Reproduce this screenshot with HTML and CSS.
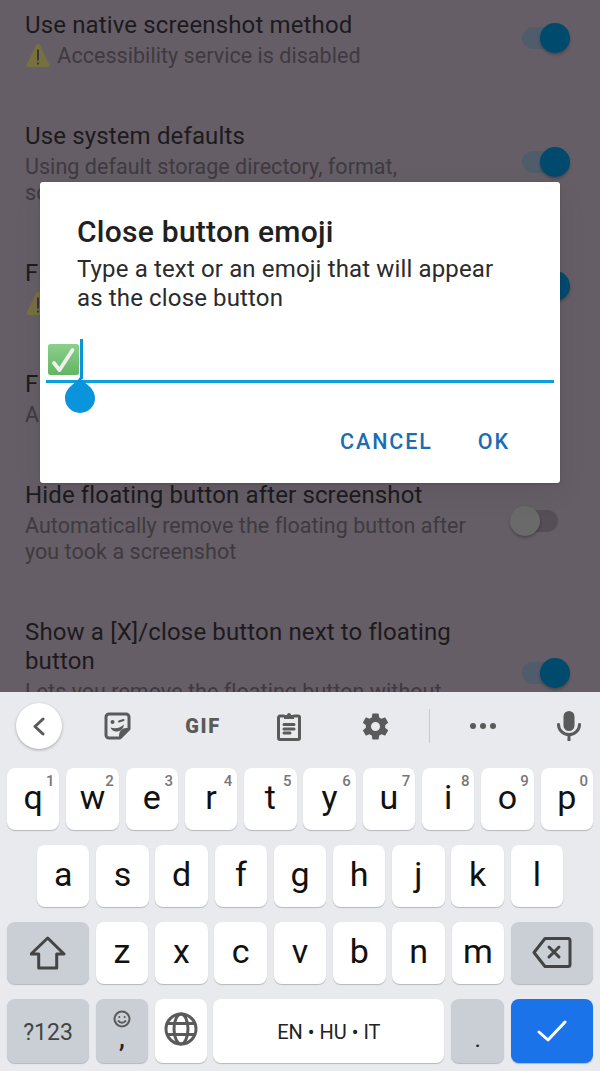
FILE: index.html
```html
<!DOCTYPE html>
<html lang="en">
<head>
  <meta charset="UTF-8">
  <meta name="viewport" content="width=device-width, initial-scale=1">
  <title>Close button emoji</title>
  <link rel="stylesheet" href="styles.css">
</head>
<body>
  <div class="screen">

    <!-- Settings behind the dialog -->
    <div class="settings">
      <div class="setting-list">
        <div class="setting-row">
          <div class="setting-text">
            <div class="setting-title">Use native screenshot method</div>
            <div class="setting-sub">
              <svg class="warn-icon" viewBox="0 0 24 24"><path class="warn-fill" d="M12 .5c1 0 1.500.8 2 1.800L23.500 22c.5 1-.2 2-1.300 2H1.800C.7 24 0 23 .5 22L10 2.300c.5-1 1-1.800 2-1.800z"/><path class="warn-mark" d="M12 6.500v11M12 19.500v2"/></svg>
              Accessibility service is disabled
            </div>
          </div>
          <div class="toggle on"><span class="track"></span><span class="thumb"></span></div>
        </div>
        <div class="setting-row">
          <div class="setting-text">
            <div class="setting-title">Use system defaults</div>
            <div class="setting-sub">Using default storage directory, format, screenshot delay</div>
          </div>
          <div class="toggle on"><span class="track"></span><span class="thumb"></span></div>
        </div>
        <div class="setting-row">
          <div class="setting-text">
            <div class="setting-title">Fl</div>
            <div class="setting-sub">
              <svg class="warn-icon" viewBox="0 0 24 24"><path class="warn-fill" d="M12 .5c1 0 1.500.8 2 1.800L23.500 22c.5 1-.2 2-1.300 2H1.800C.7 24 0 23 .5 22L10 2.300c.5-1 1-1.800 2-1.800z"/><path class="warn-mark" d="M12 6.500v11M12 19.500v2"/></svg>
            </div>
          </div>
          <div class="toggle on"><span class="track"></span><span class="thumb"></span></div>
        </div>
        <div class="setting-row">
          <div class="setting-text">
            <div class="setting-title">Fl</div>
            <div class="setting-sub">Ad</div>
          </div>
        </div>
        <div class="setting-row">
          <div class="setting-text">
            <div class="setting-title">Hide floating button after screenshot</div>
            <div class="setting-sub">Automatically remove the floating button after you took a screenshot</div>
          </div>
          <div class="toggle"><span class="track"></span><span class="thumb"></span></div>
        </div>
        <div class="setting-row setting-row-tall">
          <div class="setting-text">
            <div class="setting-title">Show a [X]/close button next to floating button</div>
            <div class="setting-sub">Lets you remove the floating button without</div>
          </div>
          <div class="toggle on"><span class="track"></span><span class="thumb"></span></div>
        </div>
      </div>

      <!-- Dialog -->
      <div class="dialog">
        <div class="dialog-title">Close button emoji</div>
        <div class="dialog-message">Type a text or an emoji that will appear as the close button</div>
        <div class="dialog-input">
          <svg class="emoji-check" viewBox="0 0 31 31" role="img" aria-label="✅">
            <defs>
              <linearGradient id="emoji-green" x1="0" y1="0" x2="0" y2="1">
                <stop offset="0" stop-color="#8ccf8c"/>
                <stop offset="1" stop-color="#62b562"/>
              </linearGradient>
            </defs>
            <rect width="31" height="31" rx="2.500" fill="url(#emoji-green)"/>
            <path d="M6 19 11.500 26 24.500 6" fill="none" stroke="#eef1ec" stroke-width="3.800" stroke-linejoin="round" stroke-linecap="round"/>
          </svg>
          <span class="cursor"></span>
          <svg class="cursor-handle" viewBox="0 0 30 36"><path d="M15 0 C18 6 30 10 30 21 A15 15 0 0 1 0 21 C0 10 12 6 15 0z"/></svg>
        </div>
        <div class="dialog-actions">
          <span class="dialog-btn">Cancel</span>
          <span class="dialog-btn">OK</span>
        </div>
      </div>
    </div>

    <!-- Keyboard -->
    <div class="keyboard">
      <div class="kb-toolbar">
        <div class="kb-back">
          <svg width="14" height="19" viewBox="0 0 14 19"><path class="icon-line" d="M11 2 3 9.500 11 17"/></svg>
        </div>
        <div class="kb-tool">
          <svg width="27" height="28" viewBox="0 0 27 28">
            <path class="icon-line" d="M5 2h17a3 3 0 0 1 3 3v12l-9 9H5a3 3 0 0 1-3-3V5a3 3 0 0 1 3-3z"/>
            <path class="icon-fill" d="M25 16v2l-8 8h-2v-3a7 7 0 0 1 7-7z"/>
            <circle class="icon-fill" cx="8.500" cy="10" r="2"/>
            <path class="icon-line thin" d="M15 9.500l4.500-1.500"/>
            <path class="icon-fill" d="M6.500 15.500c5 1.500 10 .5 13.500-3-.5 4.500-4 7-7.500 7-3 0-5-1.500-6-4z"/>
          </svg>
        </div>
        <div class="kb-tool kb-gif">GIF</div>
        <div class="kb-tool">
          <svg width="24" height="29" viewBox="0 0 24 29">
            <path class="icon-line" d="M7 4H3a1.500 1.500 0 0 0-1.500 1.500v20.500A1.500 1.500 0 0 0 3 27.500h18a1.500 1.500 0 0 0 1.500-1.500V5.500A1.500 1.500 0 0 0 21 4h-4"/>
            <path class="icon-fill" d="M7 3h3a2 2 0 0 1 4 0h3v4H7z"/>
            <path class="icon-line" d="M7 12.500h10M7 17h10M7 21h6"/>
          </svg>
        </div>
        <div class="kb-tool">
          <svg width="31" height="31" viewBox="0 0 24 24"><path class="icon-fill" d="M19.430 12.980c.04-.32.07-.64.07-.98s-.03-.66-.07-.98l2.110-1.650c.19-.15.240-.42.120-.64l-2-3.460c-.12-.22-.39-.3-.61-.22l-2.490 1c-.52-.4-1.080-.73-1.690-.98l-.38-2.650A.49.49 0 0 0 14 2h-4c-.25 0-.46.18-.49.42l-.38 2.650c-.61.25-1.170.59-1.690.98l-2.490-1c-.23-.09-.49 0-.61.22l-2 3.460c-.13.22-.07.49.12.64l2.110 1.650c-.04.32-.07.65-.07.98s.03.66.07.98l-2.110 1.650c-.19.15-.24.42-.12.64l2 3.460c.12.22.39.3.61.22l2.490-1c.52.4 1.080.73 1.690.98l.38 2.650c.03.24.24.42.49.42h4c.25 0 .46-.18.49-.42l.38-2.650c.61-.25 1.170-.59 1.690-.98l2.490 1c.23.09.49 0 .61-.22l2-3.460c.12-.22.07-.49-.12-.64l-2.110-1.650zM12 15.500a3.500 3.500 0 1 1 0-7 3.500 3.500 0 0 1 0 7z"/></svg>
        </div>
        <div class="kb-divider"></div>
        <div class="kb-tool">
          <svg width="28" height="8" viewBox="0 0 28 8"><circle class="icon-fill" cx="4" cy="4" r="3"/><circle class="icon-fill" cx="14" cy="4" r="3"/><circle class="icon-fill" cx="24" cy="4" r="3"/></svg>
        </div>
        <div class="kb-mic">
          <svg width="24" height="30" viewBox="0 0 24 30">
            <rect class="icon-fill" x="6.500" y="0" width="11" height="20" rx="5.500"/>
            <path class="icon-line" d="M1.500 13.500a10.500 10 0 0 0 21 0M12 24v6"/>
          </svg>
        </div>
      </div>

      <div class="kb-rows">
        <div class="kb-row">
          <div class="key">q<span class="key-hint">1</span></div>
          <div class="key">w<span class="key-hint">2</span></div>
          <div class="key">e<span class="key-hint">3</span></div>
          <div class="key">r<span class="key-hint">4</span></div>
          <div class="key">t<span class="key-hint">5</span></div>
          <div class="key">y<span class="key-hint">6</span></div>
          <div class="key">u<span class="key-hint">7</span></div>
          <div class="key">i<span class="key-hint">8</span></div>
          <div class="key">o<span class="key-hint">9</span></div>
          <div class="key">p<span class="key-hint">0</span></div>
        </div>
        <div class="kb-row kb-row-home">
          <div class="key">a</div>
          <div class="key">s</div>
          <div class="key">d</div>
          <div class="key">f</div>
          <div class="key">g</div>
          <div class="key">h</div>
          <div class="key">j</div>
          <div class="key">k</div>
          <div class="key">l</div>
        </div>
        <div class="kb-row">
          <div class="key key-mod key-wide">
            <svg width="36" height="34" viewBox="30 936 36 34"><path class="icon-line dark" d="M47.700 938 64 954h-7.300v14h-18v-14H31z"/></svg>
          </div>
          <div class="key">z</div>
          <div class="key">x</div>
          <div class="key">c</div>
          <div class="key">v</div>
          <div class="key">b</div>
          <div class="key">n</div>
          <div class="key">m</div>
          <div class="key key-mod key-wide">
            <svg width="40" height="32" viewBox="532 939 40 32"><path class="icon-line dark" d="M545 940.500h23a2 2 0 0 1 2 2v24a2 2 0 0 1-2 2h-23l-11-14z"/><path class="icon-line dark" d="M549 949l10 10M559 949l-10 10"/></svg>
          </div>
        </div>
        <div class="kb-row kb-row-bottom">
          <div class="key key-mod key-wide key-symbols">?123</div>
          <div class="key key-mod key-emoji">
            <svg width="18" height="18" viewBox="0 0 18 18"><circle class="icon-line thin" cx="9" cy="9" r="7.500"/><circle class="icon-fill" cx="6.300" cy="7" r="1"/><circle class="icon-fill" cx="11.700" cy="7" r="1"/><path class="icon-line thin" d="M5.500 11c1.500 2.200 5.500 2.200 7 0"/></svg>
            <span class="comma">,</span>
          </div>
          <div class="key">
            <svg width="34" height="34" viewBox="0 0 34 34">
              <circle class="icon-line" cx="17" cy="17" r="15"/>
              <ellipse class="icon-line" cx="17" cy="17" rx="7" ry="15"/>
              <path class="icon-line" d="M3.500 11.500h27M3.500 22.500h27"/>
            </svg>
          </div>
          <div class="key key-space">EN • HU • IT</div>
          <div class="key key-mod key-period">.</div>
          <div class="key key-enter">
            <svg width="30" height="22" viewBox="0 0 30 22"><path class="enter-check" d="M2 12l9 8L28 2"/></svg>
          </div>
        </div>
      </div>
    </div>

  </div>
</body>
</html>
```
FILE: styles.css
```css
html, body {
  margin: 0;
  padding: 0;
}

body {
  font-family: Roboto, "Liberation Sans", sans-serif;
}

.screen {
  width: 600px;
  height: 1071px;
  display: flex;
  flex-direction: column;
  overflow: hidden;
}

/* Settings */
.settings {
  position: relative;
  height: 692px;
  overflow: hidden;
  background: #655e66;
}

.setting-list {
  display: flex;
  flex-direction: column;
  gap: 53px;
  padding: 11px 30px 0 25px;
}

.setting-row {
  display: flex;
  align-items: center;
  min-height: 58px;
}

/* its subtitle runs on under the keyboard, the toggle stays centred on the full row */
.setting-row-tall {
  height: 110px;
  align-items: flex-start;
}

.setting-row-tall .toggle {
  margin-top: 40px;
}

.setting-text {
  width: 465px;
}

.setting-title {
  font-size: 24px;
  line-height: 29px;
  letter-spacing: 0.14px;
  color: #1d1a1e;
  margin-bottom: 3px;
}

.setting-sub {
  font-size: 21.5px;
  line-height: 26px;
  letter-spacing: 0.04px;
  color: #3e3a40;
}

.warn-icon {
  width: 24px;
  height: 24px;
  vertical-align: -4px;
  margin: 0 2px 0 1px;
}

.warn-fill {
  fill: #77703f;
}

.warn-mark {
  fill: none;
  stroke: #38363a;
  stroke-width: 2;
}

.toggle {
  position: relative;
  width: 48px;
  height: 30px;
  margin-left: 32px;
  margin-bottom: 4px;
  flex: none;
}

.toggle .track {
  position: absolute;
  left: 0;
  top: 4px;
  width: 36px;
  height: 22px;
  border-radius: 11px;
  background: #4f5c6b;
}

.toggle .thumb {
  position: absolute;
  left: 18px;
  top: 0;
  width: 30px;
  height: 30px;
  border-radius: 50%;
  background: #004a6e;
  box-shadow: 0 2px 3px rgba(0, 0, 0, 0.25);
}

.toggle:not(.on) .track {
  background: #554e56;
}

.toggle:not(.on) .thumb {
  left: -12px;
  background: #6a6a6a;
}

/* Dialog */
.dialog {
  position: absolute;
  left: 40px;
  top: 182px;
  width: 520px;
  height: 301px;
  box-sizing: border-box;
  padding-top: 32px;
  background: #fff;
  border-radius: 3px;
  box-shadow: 0 10px 30px rgba(0, 0, 0, 0.07), 0 1px 3px rgba(0, 0, 0, 0.15);
}

.dialog-title {
  font-size: 30px;
  font-weight: 500;
  line-height: 36px;
  letter-spacing: 0.26px;
  color: #212121;
  margin: 0 37px 5px;
}

.dialog-message {
  font-size: 24px;
  line-height: 29px;
  letter-spacing: 0.14px;
  color: #2b2b2b;
  margin: 0 50px 0 37px;
}

.dialog-input {
  position: relative;
  height: 41px;
  margin: 26px 6px 0;
  display: flex;
  align-items: flex-start;
  border-bottom: 3px solid #0b9ee0;
}

.emoji-check {
  width: 31px;
  height: 31px;
  margin: 5px 0 0 2px;
}

.cursor {
  width: 3px;
  height: 40px;
  margin-left: 1px;
  background: #0b94dc;
}

.cursor-handle {
  position: absolute;
  left: 19px;
  top: 38px;
  width: 30px;
  height: 36px;
  fill: #0994dc;
}

.dialog-actions {
  display: flex;
  justify-content: flex-end;
  gap: 45px;
  margin-top: 44px;
  padding-right: 50px;
}

.dialog-btn {
  font-size: 21.5px;
  font-weight: 500;
  line-height: 30px;
  letter-spacing: 1.9px;
  text-transform: uppercase;
  color: #1a6db3;
}

/* Keyboard */
.keyboard {
  flex: 1;
  display: flex;
  flex-direction: column;
  background: #e8eaed;
}

.kb-toolbar {
  display: flex;
  align-items: center;
  height: 68px;
  padding: 0 0 0 16px;
}

.kb-back {
  width: 46px;
  height: 46px;
  margin: 0 12px 0 0;
  display: flex;
  align-items: center;
  justify-content: center;
  flex: none;
  background: #fff;
  border-radius: 50%;
  box-shadow: 0 1px 3px rgba(0, 0, 0, 0.3);
}

.kb-tool {
  width: 86px;
  display: flex;
  align-items: center;
  justify-content: center;
  flex: none;
}

.kb-gif {
  font-size: 20px;
  font-weight: 900;
  line-height: 24px;
  letter-spacing: 1.6px;
  color: #5a5a5a;
}

.kb-divider {
  width: 1px;
  height: 34px;
  margin: 0 10px 0 11px;
  background: #c8cacd;
  flex: none;
}

.kb-mic {
  margin-left: 31px;
  display: flex;
}

.icon-line {
  fill: none;
  stroke: #5a5a5a;
  stroke-width: 3;
  stroke-linejoin: round;
  stroke-linecap: round;
}

.icon-line.thin {
  stroke-width: 2;
}

.icon-line.dark {
  stroke: #444;
}

.icon-fill {
  fill: #5a5a5a;
}

.kb-rows {
  display: flex;
  flex-direction: column;
  gap: 15px;
  padding: 8px 7px 0;
}

.kb-row {
  display: flex;
  gap: 6.8px;
  height: 62px;
}

.kb-row-home {
  padding: 0 30px;
}

.kb-row-bottom {
  height: 64px;
}

.key {
  position: relative;
  flex: 1 1 0;
  display: flex;
  align-items: center;
  justify-content: center;
  box-sizing: border-box;
  padding-bottom: 4px;
  font-size: 34px;
  color: #111;
  background: #fff;
  border-radius: 8px;
  box-shadow: 0 1px 1px #b4b7bc;
}

.key-hint {
  position: absolute;
  top: 5px;
  right: 5px;
  font-size: 15px;
  font-weight: 500;
  line-height: 17px;
  color: #777;
}

.key-mod {
  background: #caced5;
}

.key-wide {
  flex: 0 0 82px;
  padding-bottom: 0;
}

.key-symbols {
  padding-top: 2px;
  font-size: 23px;
  color: #444;
}

.key-emoji {
  flex: 0 0 52px;
  flex-direction: column;
  justify-content: flex-start;
  padding: 11px 0 0;
}

.comma {
  font-size: 26px;
  font-weight: 500;
  line-height: 20px;
  color: #222;
}

.key-space {
  flex: 0 0 231px;
  padding: 2px 0 0;
  font-size: 20px;
  color: #222;
}

.key-period {
  flex: 0 0 53px;
  padding: 15px 0 0;
  font-size: 24px;
  color: #222;
}

.key-enter {
  flex: 0 0 82px;
  padding: 0;
  background: #1a73e8;
}

.enter-check {
  fill: none;
  stroke: #fff;
  stroke-width: 3;
  stroke-linecap: round;
  stroke-linejoin: round;
}
```
